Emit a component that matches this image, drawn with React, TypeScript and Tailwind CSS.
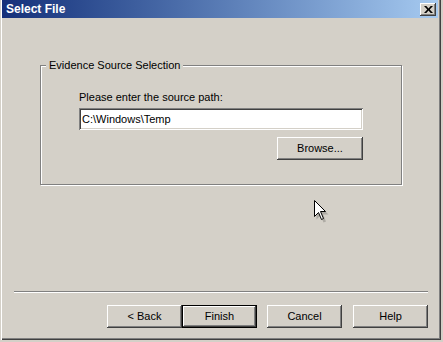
import React from 'react';

const raised =
    'bg-[#d4d0c8] shadow-[inset_-1px_-1px_#404040,inset_1px_1px_#ffffff,inset_-2px_-2px_#808080,inset_2px_2px_#d4d0c8]';

const WizardButton: React.FC<{ label: string; isDefault?: boolean; className?: string }> = ({ label, isDefault, className }) => (
    <button
        className={`${className ?? ''} w-[75px] h-[23px] flex items-center justify-center text-black ${
            isDefault ? 'border border-black' : ''
        }`}
    >
        <span className={`w-full h-full flex items-center justify-center ${raised}`}>{label}</span>
    </button>
);

const Cursor: React.FC = () => (
    <svg className="absolute left-[314px] top-[200px]" width="16" height="24" viewBox="0 0 16 24">
        <path d="M2.5 2.5 L2.5 19.5 L6.5 15.5 L9.5 22.5 L12 21.5 L9 14.5 L14.5 14.5 Z" fill="#000" opacity="0.18" />
        <path d="M0.5 0.5 L0.5 16.5 L4.5 12.5 L7.5 19.5 L9.5 18.5 L6.5 11.5 L11.5 11.5 Z" fill="#fff" stroke="#000" strokeWidth="1" />
    </svg>
);

export default function App() {
    return (
        <div className="relative w-[443px] h-[342px] overflow-hidden bg-[#d4d0c8] text-[11px] leading-[13px] text-black font-['Liberation_Sans',Arial,sans-serif]">
            {/* window */}
            <div className="w-[441px] h-[340px] flex flex-col pl-[2px] pr-[3px] pb-[2px] shadow-[inset_1px_0_#d4d0c8,inset_2px_0_#ffffff,inset_-1px_-1px_#404040,inset_-2px_-2px_#808080]">
                {/* title bar */}
                <div className="h-[18px] flex items-start justify-between pl-[4px] pr-[2px] bg-gradient-to-r from-[#16307a] to-[#a6caf0]">
                    <span className="mt-[2px] text-[12px] leading-[14px] font-bold text-white">Select File</span>
                    <div className={`mt-[3px] w-[16px] h-[13px] flex items-center justify-center ${raised}`}>
                        <svg width="9" height="7" viewBox="0 0 9 7">
                            <path d="M0 0h2.3l2.2 2.4 2.2-2.4h2.3l-3.3 3.5 3.3 3.5h-2.3l-2.2-2.4-2.2 2.4h-2.3l3.3-3.5z" fill="#000" />
                        </svg>
                    </div>
                </div>

                {/* body */}
                <div className="flex-1 flex flex-col">
                    {/* group box */}
                    <div className="relative mt-[47px] ml-[38px] w-[362px] h-[120px] border border-[#808080] shadow-[1px_1px_#ffffff,inset_1px_1px_#ffffff]">
                        <span className="absolute left-[5px] -top-[7px] px-[3px] bg-[#d4d0c8]">Evidence Source Selection</span>
                        <div className="flex flex-col w-[284px] ml-[38px] mt-[25px]">
                            <span>Please enter the source path:</span>
                            <div className="mt-[4px] h-[22px] flex items-center pl-[3px] bg-white shadow-[inset_1px_1px_#808080,inset_-1px_-1px_#ffffff,inset_2px_2px_#404040,inset_-2px_-2px_#d4d0c8]">
                                C:\Windows\Temp
                            </div>
                            <button className={`self-end mt-[7px] w-[86px] h-[23px] flex items-center justify-center ${raised}`}>
                                Browse...
                            </button>
                        </div>
                    </div>

                    {/* separator */}
                    <div className="mt-[106px] ml-[12px] w-[414px] h-[2px] border-t border-[#808080] border-b border-b-white" />

                    {/* buttons */}
                    <div className="flex mt-[12px] ml-[105px]">
                        <WizardButton label="< Back" />
                        <WizardButton label="Finish" isDefault />
                        <WizardButton label="Cancel" className="ml-[10px]" />
                        <WizardButton label="Help" className="ml-[11px]" />
                    </div>
                </div>
            </div>

            <Cursor />
        </div>
    );
}
